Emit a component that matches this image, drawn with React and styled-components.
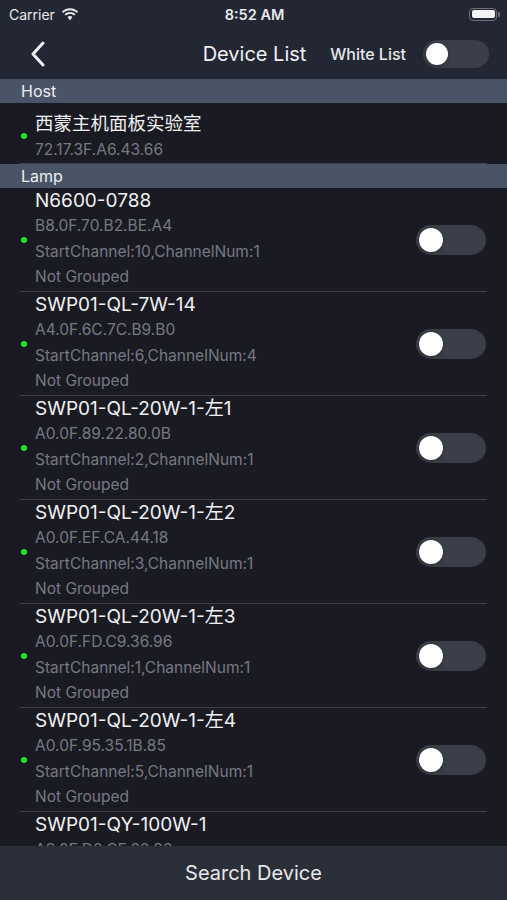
import React from "react";
import styled, { createGlobalStyle } from "styled-components";

const GlobalStyle = createGlobalStyle`
  html, body {
    margin: 0;
    padding: 0;
    background: #1a1b22;
  }
  * {
    box-sizing: border-box;
  }
`;

const FONT = `"Inter", "Noto Sans CJK SC", sans-serif`;

const lamps = [
  { name: "N6600-0788", mac: "B8.0F.70.B2.BE.A4", start: 10, num: 1 },
  { name: "SWP01-QL-7W-14", mac: "A4.0F.6C.7C.B9.B0", start: 6, num: 4 },
  { name: "SWP01-QL-20W-1-左1", mac: "A0.0F.89.22.80.0B", start: 2, num: 1 },
  { name: "SWP01-QL-20W-1-左2", mac: "A0.0F.EF.CA.44.18", start: 3, num: 1 },
  { name: "SWP01-QL-20W-1-左3", mac: "A0.0F.FD.C9.36.96", start: 1, num: 1 },
  { name: "SWP01-QL-20W-1-左4", mac: "A0.0F.95.35.1B.85", start: 5, num: 1 },
  { name: "SWP01-QY-100W-1", mac: "A3.0F.D0.CF.60.36", start: 4, num: 1 },
];

const Page = () => (
  <Screen>
    <GlobalStyle />
    <TopBar>
      <StatusBar>
        <Carrier>
          Carrier
          <svg width="18" height="13" viewBox="0 0 18 13">
            <path
              d="M9 2.2c2.6 0 5 1 6.8 2.7l1.3-1.4C14.9 1.4 12 .2 9 .2S3.1 1.4.9 3.5l1.3 1.4C4 3.2 6.4 2.2 9 2.2z"
              fill="#e8e9ec"
            />
            <path
              d="M9 5.9c1.6 0 3.1.6 4.2 1.7l1.3-1.4C13 4.8 11.1 4 9 4s-4 .8-5.5 2.2l1.3 1.4C5.9 6.5 7.4 5.9 9 5.9z"
              fill="#e8e9ec"
            />
            <path d="M9 8c-.9 0-1.8.4-2.4 1L9 12.4 11.4 9C10.8 8.4 9.9 8 9 8z" fill="#e8e9ec" />
          </svg>
        </Carrier>
        <Clock>8:52 AM</Clock>
        <Battery>
          <BatteryBody>
            <BatteryFill />
          </BatteryBody>
          <BatteryTip />
        </Battery>
      </StatusBar>
      <NavBar>
        <BackButton>
          <svg width="16" height="26" viewBox="0 0 16 26">
            <path
              d="M13 2 L3 13 L13 24"
              fill="none"
              stroke="#f2f2f4"
              strokeWidth="3"
              strokeLinecap="round"
              strokeLinejoin="round"
            />
          </svg>
        </BackButton>
        <Title>Device List</Title>
        <NavRight>
          <WhiteLabel>White List</WhiteLabel>
          <Toggle $w={66} $h={28} />
        </NavRight>
      </NavBar>
    </TopBar>

    <List>
      <SectionHeader>Host</SectionHeader>
      <HostRow>
        <Dot />
        <RowText>
          <HostName>西蒙主机面板实验室</HostName>
          <HostSub>72.17.3F.A6.43.66</HostSub>
        </RowText>
      </HostRow>
      <SectionHeader>Lamp</SectionHeader>
      {lamps.map((lamp) => (
        <LampRow key={lamp.mac}>
          <Dot />
          <RowText>
            <LampName>{lamp.name}</LampName>
            <SubLine>{lamp.mac}</SubLine>
            <SubLine>
              StartChannel:{lamp.start},ChannelNum:{lamp.num}
            </SubLine>
            <SubLine>Not Grouped</SubLine>
          </RowText>
          <Toggle $w={70} $h={30} />
        </LampRow>
      ))}
    </List>

    <BottomBar>Search Device</BottomBar>
  </Screen>
);

const Toggle = ({ $w, $h }) => (
  <Track $w={$w} $h={$h}>
    <Knob $d={$h - 6} />
  </Track>
);

const Screen = styled.div`
  width: 507px;
  height: 900px;
  display: flex;
  flex-direction: column;
  overflow: hidden;
  background: #1a1b22;
  font-family: ${FONT};
  color: #f0f0f2;
`;

const TopBar = styled.header`
  background: #232733;
  flex-shrink: 0;
`;

const StatusBar = styled.div`
  height: 28px;
  display: grid;
  grid-template-columns: 1fr auto 1fr;
  align-items: center;
  padding: 0 7px 0 9px;
  font-size: 14px;
  color: #e8e9ec;
`;

const Carrier = styled.div`
  display: flex;
  align-items: center;
  gap: 6px;
  font-size: 14px;
`;

const Clock = styled.div`
  font-weight: 600;
  font-size: 14.5px;
`;

const Battery = styled.div`
  justify-self: end;
  display: flex;
  align-items: center;
  gap: 1px;
`;

const BatteryBody = styled.div`
  width: 28px;
  height: 13px;
  border: 1.5px solid #6b6f7a;
  border-radius: 4px;
  padding: 1.5px;
`;

const BatteryFill = styled.div`
  width: 100%;
  height: 100%;
  background: #f4f4f6;
  border-radius: 2px;
`;

const BatteryTip = styled.div`
  width: 2px;
  height: 5px;
  background: #6b6f7a;
  border-radius: 0 1px 1px 0;
`;

const NavBar = styled.nav`
  height: 51px;
  display: grid;
  grid-template-columns: 1fr auto 1fr;
  align-items: center;
  padding: 0 18px 0 20px;
`;

const BackButton = styled.div`
  display: flex;
  align-items: center;
  padding: 1px 0 0 10px;
`;

const Title = styled.h1`
  margin: 0;
  font-size: 20px;
  font-weight: 400;
  color: #f0f0f2;
`;

const NavRight = styled.div`
  justify-self: end;
  display: flex;
  align-items: center;
  gap: 17px;
`;

const WhiteLabel = styled.span`
  font-size: 16px;
  font-weight: 500;
  color: #e6e7ea;
`;

const Track = styled.div`
  width: ${(p) => p.$w}px;
  height: ${(p) => p.$h}px;
  border-radius: ${(p) => p.$h / 2}px;
  background: #3a3e49;
  display: flex;
  align-items: center;
  padding: 0 3px;
  flex-shrink: 0;
`;

const Knob = styled.div`
  width: ${(p) => p.$d}px;
  height: ${(p) => p.$d}px;
  border-radius: 50%;
  background: #ffffff;
  box-shadow: 0 1px 3px rgba(0, 0, 0, 0.35);
`;

const List = styled.main`
  flex: 1;
  overflow: hidden;
  background: #1a1b22;
`;

const SectionHeader = styled.div`
  height: 24px;
  line-height: 24px;
  padding-left: 21px;
  background: #4a5467;
  font-size: 16px;
  color: #eceef2;
`;

const HostRow = styled.div`
  display: flex;
  align-items: center;
  margin-left: 20px;
  margin-right: 20px;
  height: 61px;
  padding-top: 6px;
  border-bottom: 1px solid #3d414b;
`;

const LampRow = styled.div`
  display: flex;
  align-items: center;
  margin-left: 20px;
  margin-right: 20px;
  height: 104px;
  padding-right: 1px;
  border-bottom: 1px solid #3d414b;
`;

const Dot = styled.span`
  width: 6px;
  height: 6px;
  border-radius: 50%;
  background: #19e62a;
  margin: 0 8px 0 1px;
  flex-shrink: 0;
`;

const RowText = styled.div`
  flex: 1;
  display: flex;
  flex-direction: column;
  min-width: 0;
`;

const HostName = styled.div`
  font-size: 18.5px;
  line-height: 26px;
  color: #f0f0f2;
`;

const HostSub = styled.div`
  font-size: 15.5px;
  line-height: 24px;
  color: #767983;
  margin-top: 2px;
`;

const LampName = styled.div`
  font-size: 19px;
  line-height: 24px;
  color: #f0f0f2;
`;

const SubLine = styled.div`
  font-size: 15.5px;
  line-height: 25.5px;
  color: #767983;
`;

const BottomBar = styled.footer`
  height: 54px;
  flex-shrink: 0;
  display: flex;
  align-items: center;
  justify-content: center;
  background: #2b2f39;
  font-size: 20px;
  color: #e8e9ec;
`;

export default function App() {
  return <Page />;
}
